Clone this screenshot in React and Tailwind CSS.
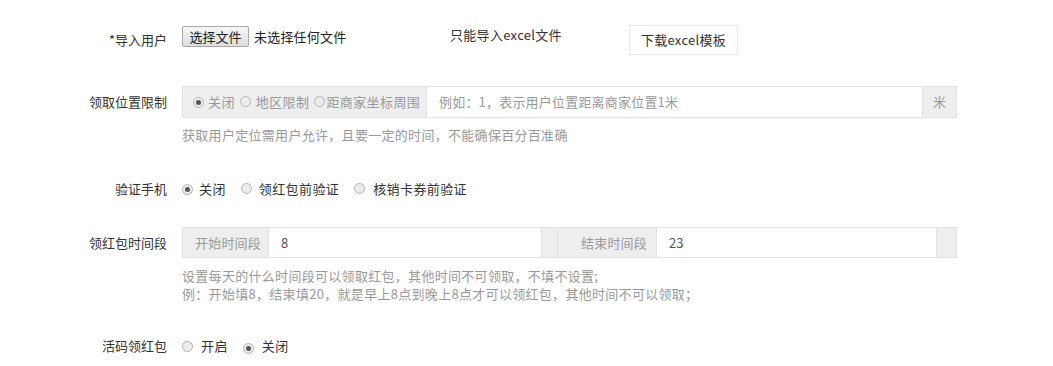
import React from "react";

const font = { fontFamily: '"Noto Sans CJK SC", "Noto Sans", sans-serif' };

function Radio({ checked }) {
  return (
    <span className="inline-flex items-center justify-center w-[11px] h-[11px] rounded-full border border-[#b5b5b5] bg-[#ececec] shrink-0">
      {checked && <span className="w-[5px] h-[5px] rounded-full bg-[#555]" />}
    </span>
  );
}

function Label({ children }) {
  return <div className="w-[167px] shrink-0 text-right text-[13px] text-[#333] leading-[18px]">{children}</div>;
}

export default function App() {
  return (
    <div className="w-[1053px] h-[366px] bg-white overflow-hidden" style={font}>
      <div className="flex flex-col pt-[25px]">
        {/* Row 1 */}
        <div className="flex items-start h-[30px]">
          <div className="flex items-center h-[30px]">
            <Label>*导入用户</Label>
          </div>
          <div className="ml-[15px] w-[268px] flex items-center h-[23px]">
            <button className="h-[21px] w-[67px] border border-[#a9a9a9] rounded-[2px] bg-gradient-to-b from-[#f6f6f6] to-[#dedede] text-[13px] text-[#222] leading-[19px]">选择文件</button>
            <span className="ml-[5px] text-[13px] text-[#222] tracking-[0.2px]">未选择任何文件</span>
          </div>
          <div className="w-[179px] text-[13px] text-[#333] leading-[18px] pt-[1px] tracking-[0.3px]">只能导入excel文件</div>
          <button className="h-[30px] w-[109px] border border-[#e6e6e6] bg-white text-[13px] text-[#333] tracking-[0.3px]">下载excel模板</button>
        </div>

        {/* Row 2 */}
        <div className="flex items-center mt-[31px] h-[32px]">
          <Label>领取位置限制</Label>
          <div className="ml-[15px] flex h-[32px] w-[775px]">
            <div className="w-[245px] shrink-0 bg-[#eeeeee] border border-[#e3e3e3] flex items-center pl-[10px] text-[13px] text-[#999] tracking-[0.4px]">
              <Radio checked />
              <span className="ml-[4px]">关闭</span>
              <span className="ml-[5px]"><Radio /></span>
              <span className="ml-[5px]">地区限制</span>
              <span className="ml-[5px]"><Radio /></span>
              <span className="ml-[1px]">距商家坐标周围</span>
            </div>
            <div className="flex-1 border border-[#e3e3e3] border-l-0 flex items-center pl-[12px] text-[13px] text-[#999] tracking-[0.2px]">例如：1，表示用户位置距离商家位置1米</div>
            <div className="w-[34px] shrink-0 bg-[#eeeeee] border border-[#e3e3e3] border-l-0 flex items-center justify-center text-[13px] text-[#999]">米</div>
          </div>
        </div>
        <div className="ml-[182px] mt-[8px] text-[13px] text-[#999] leading-[18px] tracking-[0.3px]">获取用户定位需用户允许，且要一定的时间，不能确保百分百准确</div>

        {/* Row 3 */}
        <div className="flex items-center mt-[36px] h-[18px]">
          <Label>验证手机</Label>
          <div className="ml-[15px] flex items-center text-[13px] text-[#333] tracking-[0.4px]">
            <Radio checked />
            <span className="ml-[6px]">关闭</span>
            <span className="ml-[15px]"><Radio /></span>
            <span className="ml-[7px]">领红包前验证</span>
            <span className="ml-[15px]"><Radio /></span>
            <span className="ml-[8px]">核销卡券前验证</span>
          </div>
        </div>

        {/* Row 4 */}
        <div className="flex items-center mt-[29px] h-[31px]">
          <Label>领红包时间段</Label>
          <div className="ml-[15px] flex h-[31px] w-[775px] text-[13px]">
            <div className="w-[87px] shrink-0 bg-[#eeeeee] border border-[#e3e3e3] flex items-center pl-[12px] text-[#999] tracking-[0.2px]">开始时间段</div>
            <div className="w-[273px] shrink-0 border border-[#e3e3e3] border-l-0 flex items-center pl-[12px] text-[#555]">8</div>
            <div className="w-[15px] shrink-0 bg-[#eeeeee] border-y border-[#e3e3e3]" />
            <div className="w-[100px] shrink-0 bg-[#eeeeee] border border-[#e3e3e3] flex items-center pl-[23px] text-[#999] tracking-[0.2px]">结束时间段</div>
            <div className="w-[280px] shrink-0 border border-[#e3e3e3] border-l-0 flex items-center pl-[12px] text-[#555]">23</div>
            <div className="flex-1 bg-[#eeeeee] border border-[#e3e3e3] border-l-0" />
          </div>
        </div>
        <div className="ml-[182px] mt-[9px] text-[13px] text-[#999] leading-[18px] tracking-[0.3px]">
          <div>设置每天的什么时间段可以领取红包，其他时间不可领取，不填不设置;</div>
          <div>例：开始填8，结束填20，就是早上8点到晚上8点才可以领红包，其他时间不可以领取；</div>
        </div>

        {/* Row 5 */}
        <div className="flex items-center mt-[34px] h-[18px]">
          <Label>活码领红包</Label>
          <div className="ml-[15px] flex items-center text-[13px] text-[#333] tracking-[0.4px]">
            <Radio />
            <span className="ml-[8px]">开启</span>
            <span className="ml-[15px]"><Radio checked /></span>
            <span className="ml-[8px]">关闭</span>
          </div>
        </div>
      </div>
    </div>
  );
}
